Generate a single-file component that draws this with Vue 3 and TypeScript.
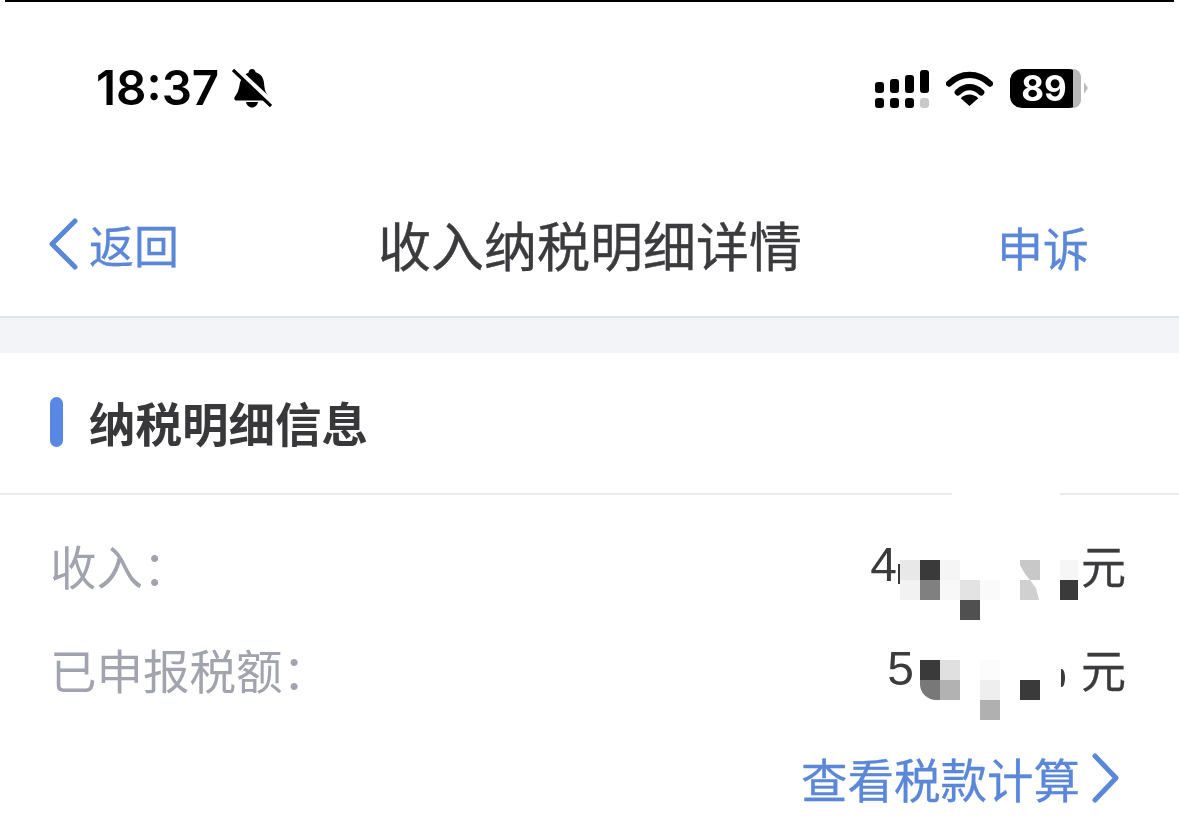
<script setup lang="ts">
interface Tile { c: number; r: number; color: string; cls?: string }

const incomeTiles: Tile[] = [
  { c: 0, r: 0, color: '#e8e8e8' }, { c: 1, r: 0, color: '#3a3a3a' }, { c: 2, r: 0, color: '#f5f5f5' },
  { c: 6, r: 0, color: '#c8c8c8', cls: 'cut-a' }, { c: 8, r: 0, color: '#f6f6f6', cls: 'narrow' },
  { c: 0, r: 1, color: '#f2f2f2' }, { c: 1, r: 1, color: '#808080' }, { c: 2, r: 1, color: '#f8f8f8' },
  { c: 3, r: 1, color: '#e3e3e3' }, { c: 4, r: 1, color: '#fafafa' }, { c: 6, r: 1, color: '#d0d0d0', cls: 'cut-b' },
  { c: 8, r: 1, color: '#3a3a3a', cls: 'narrow' }, { c: 3, r: 2, color: '#505050' },
]
const taxTiles: Tile[] = [
  { c: 0, r: 0, color: '#3a3a3a' }, { c: 1, r: 0, color: '#e0e0e0' }, { c: 3, r: 0, color: '#fcfcfc' },
  { c: 0, r: 1, color: '#787878', cls: 'cut-c' }, { c: 1, r: 1, color: '#b2b2b2' }, { c: 3, r: 1, color: '#eeeeee' },
  { c: 5, r: 1, color: '#3a3a3a' }, { c: 3, r: 2, color: '#b0b0b0' },
]
function place(t: Tile) {
  return { gridColumn: t.c + 1, gridRow: t.r + 1, background: t.color }
}
const bars = [11, 14, 18, 23]
</script>

<template>
  <div class="screen">
    <header class="status">
      <div class="clock">
        <span class="time">18:37</span>
        <svg class="bell" viewBox="0 0 40 40" width="40" height="40">
          <path d="M20 1c2 0 3.400 1.400 3.600 3.200C29 5.800 31.600 10 32 15c.4 5 1 9 3.500 12 1.400 2 1.500 4.500 1.500 5.500H4c-1.500 0-2-1.500-1.500-3 1.800-3 4-6 5-12 .8-6 4-11 9-12.800C16.800 2.400 18 1 20 1z" fill="#000"/>
          <path d="M14 34h12c-.5 3-3 5.500-6 5.500s-5.500-2.500-6-5.500z" fill="#000"/>
          <path d="M3 1l35 33" stroke="#fff" stroke-width="7"/>
          <path d="M1 2l38 36" stroke="#000" stroke-width="3.200"/>
        </svg>
      </div>
      <div class="indicators">
        <div class="signal">
          <div class="signal-col" v-for="(h, i) in bars" :key="i">
            <i class="bar" :style="{ height: h + 'px' }"></i>
            <i class="dot" :class="{ faint: i === 3 }"></i>
          </div>
        </div>
        <svg class="wifi" viewBox="0 0 48 38" width="47" height="37">
          <path d="M3 14C15 2 33 2 45 14" fill="none" stroke="#000" stroke-width="6.500" stroke-linecap="round"/>
          <path d="M12 23c7.500-7 16.500-7 24 0" fill="none" stroke="#000" stroke-width="6.500" stroke-linecap="round"/>
          <path d="M24 37l-9-8c5-5 13-5 18 0z" fill="#000"/>
        </svg>
        <div class="battery"><span class="level">89</span><i class="rest"></i></div>
        <i class="cap"></i>
      </div>
    </header>

    <nav class="nav">
      <div class="back">
        <svg viewBox="0 0 32 52" width="32" height="52"><path d="M27 3L4 26l23 23" fill="none" stroke="#5b87d8" stroke-width="5" stroke-linecap="round" stroke-linejoin="round"/></svg>
        <span>返回</span>
      </div>
      <h1 class="title">收入纳税明细详情</h1>
      <span class="appeal">申诉</span>
    </nav>

    <div class="band"></div>

    <section class="section-head">
      <i class="mark"></i>
      <h2>纳税明细信息</h2>
    </section>

    <section class="details">
      <i class="patch"></i>
      <div class="row row-income">
        <span class="label">收入：</span>
        <span class="value">
          <span class="digit">4</span>
          <i class="stem"></i>
          <span class="hidden-part"></span>
          <span class="unit">元</span>
        </span>
        <div class="mosaic" aria-hidden="true">
          <i v-for="(t, i) in incomeTiles" :key="i" :class="t.cls" :style="place(t)"></i>
        </div>
      </div>
      <div class="row row-tax">
        <span class="label">已申报税额：</span>
        <span class="value">
          <span class="digit">5</span>
          <span class="hidden-part wide"></span>
          <i class="arc"></i>
          <span class="unit">元</span>
        </span>
        <div class="mosaic" aria-hidden="true">
          <i v-for="(t, i) in taxTiles" :key="i" :class="t.cls" :style="place(t)"></i>
        </div>
      </div>
      <div class="more">
        <span>查看税款计算</span>
        <svg viewBox="0 0 30 50" width="30" height="50"><path d="M5 3l21 22L5 47" fill="none" stroke="#5b87d8" stroke-width="5" stroke-linecap="round" stroke-linejoin="round"/></svg>
      </div>
    </section>
  </div>
</template>

<style>
html, body { margin: 0; background: #fff; }
</style>

<style scoped>
.screen {
  width: 1179px;
  height: 827px;
  overflow: hidden;
  background: #fff;
  font-family: "Noto Sans CJK SC", "Noto Sans", sans-serif;
  box-sizing: border-box;
  filter: blur(0.5px);
}
.status {
  height: 178px;
  box-sizing: border-box;
  border-top: 2px solid #000;
  margin: 0 5px;
  padding: 58px 86px 0 91px;
  display: flex;
  justify-content: space-between;
  align-items: flex-start;
}
.clock { display: flex; align-items: center; gap: 13px; height: 56px; }
.time {
  font-family: Inter, "Liberation Sans", sans-serif;
  font-weight: 600;
  font-size: 47.500px;
  line-height: 56px;
  color: #000;
}
.indicators { display: flex; align-items: center; height: 56px; }
.signal { display: flex; gap: 5.500px; margin-right: 17px; }
.signal-col { display: flex; flex-direction: column; justify-content: flex-end; align-items: center; height: 39px; gap: 5px; }
.signal-col i { display: block; width: 9.500px; background: #000; border-radius: 3px; }
.signal-col .dot { height: 10px; }
.signal-col .faint { background: #c9c9c9; }
.wifi { margin-right: 17px; }
.battery {
  width: 71px;
  height: 39px;
  border-radius: 12px;
  background: #000;
  position: relative;
  display: flex;
  align-items: center;
}
.level {
  font-family: Inter, "Liberation Sans", sans-serif;
  font-weight: 700;
  font-size: 35px;
  color: #fff;
  width: 68px;
  text-align: center;
  line-height: 39px;
}
.rest {
  width: 8px;
  height: 39px;
  background: #b8b8b8;
  position: absolute;
  right: 0;
  top: 0;
  border-radius: 0 12px 12px 0;
}
.cap {
  width: 0;
  height: 0;
  margin-left: 3px;
  border-left: 4px solid #bcbcbc;
  border-top: 6px solid transparent;
  border-bottom: 6px solid transparent;
}
.nav {
  height: 140px;
  box-sizing: border-box;
  padding: 0 90px 6px 48px;
  display: flex;
  align-items: center;
  justify-content: space-between;
  border-bottom: 2px solid #e2e3e8;
}
.back {
  display: flex;
  align-items: center;
  gap: 9px;
  color: #5b87d8;
  font-size: 45px;
  line-height: 60px;
}
.back span { padding-top: 2px; -webkit-text-stroke: 0.3px #5b87d8; }
.title {
  margin: 0 0 0 4px;
  font-weight: 400;
  font-size: 53px;
  line-height: 70px;
  color: #3b3b3e;
  -webkit-text-stroke: 0.4px #3b3b3e;
}
.appeal {
  color: #5b87d8;
  font-size: 46px;
  line-height: 60px;
  padding-top: 4px;
  -webkit-text-stroke: 0.3px #5b87d8;
}
.band { height: 35px; background: #f3f4f8; }
.section-head {
  height: 142px;
  box-sizing: border-box;
  padding: 0 0 2px 50px;
  display: flex;
  align-items: center;
  gap: 26px;
  border-bottom: 2px solid #e9eaee;
}
.mark { width: 13px; height: 50px; border-radius: 6.500px; background: #5a86e4; }
.section-head h2 {
  margin: 0;
  font-size: 46.500px;
  font-weight: 700;
  line-height: 60px;
  color: #38383b;
}
.details { position: relative; padding: 40px 53px 0 50px; }
.patch { position: absolute; left: 952px; top: -6px; width: 108px; height: 12px; background: #fff; }
.row {
  display: flex;
  justify-content: space-between;
  align-items: center;
  height: 60px;
  position: relative;
}
.row-tax { margin-top: 44px; }
.label { font-size: 46.500px; line-height: 60px; color: #a1a4ae; }
.value { display: flex; align-items: center; color: #3b3b3e; font-size: 45px; line-height: 60px; }
.digit { font-family: "Liberation Sans", sans-serif; font-size: 48px; }
.stem { display: block; width: 2px; height: 20px; background: #3a3a3a; margin: 18px 0 0 1px; }
.hidden-part { width: 181px; }
.hidden-part.wide { width: 145px; }
.arc {
  display: block;
  box-sizing: border-box;
  width: 6px;
  height: 18px;
  margin: 18px 16px 0 0;
  border-right: 4px solid #3b3b3e;
  border-radius: 0 50% 50% 0;
}
.unit { font-family: "Noto Sans CJK SC", sans-serif; -webkit-text-stroke: 0.3px #3b3b3e; }
.mosaic {
  position: absolute;
  display: grid;
  grid-template-columns: repeat(9, 20px);
  grid-template-rows: repeat(3, 20px);
}
.row-income .mosaic { left: 850px; top: 25px; }
.row-tax .mosaic { left: 870px; top: 21px; grid-template-columns: repeat(6, 20px); }
.cut-a { clip-path: polygon(0 0, 100% 0, 100% 100%, 50% 100%, 25% 70%, 0 25%); }
.cut-b { clip-path: polygon(0 0, 50% 0, 80% 40%, 95% 100%, 0 100%); }
.cut-c { border-bottom-left-radius: 16px; }
.narrow { width: 18px; }
.more {
  display: flex;
  justify-content: flex-end;
  align-items: center;
  gap: 10px;
  margin-top: 49px;
  color: #5b87d8;
  font-size: 46.500px;
  line-height: 60px;
  padding-right: 6px;
  -webkit-text-stroke: 0.3px #5b87d8;
}
</style>
